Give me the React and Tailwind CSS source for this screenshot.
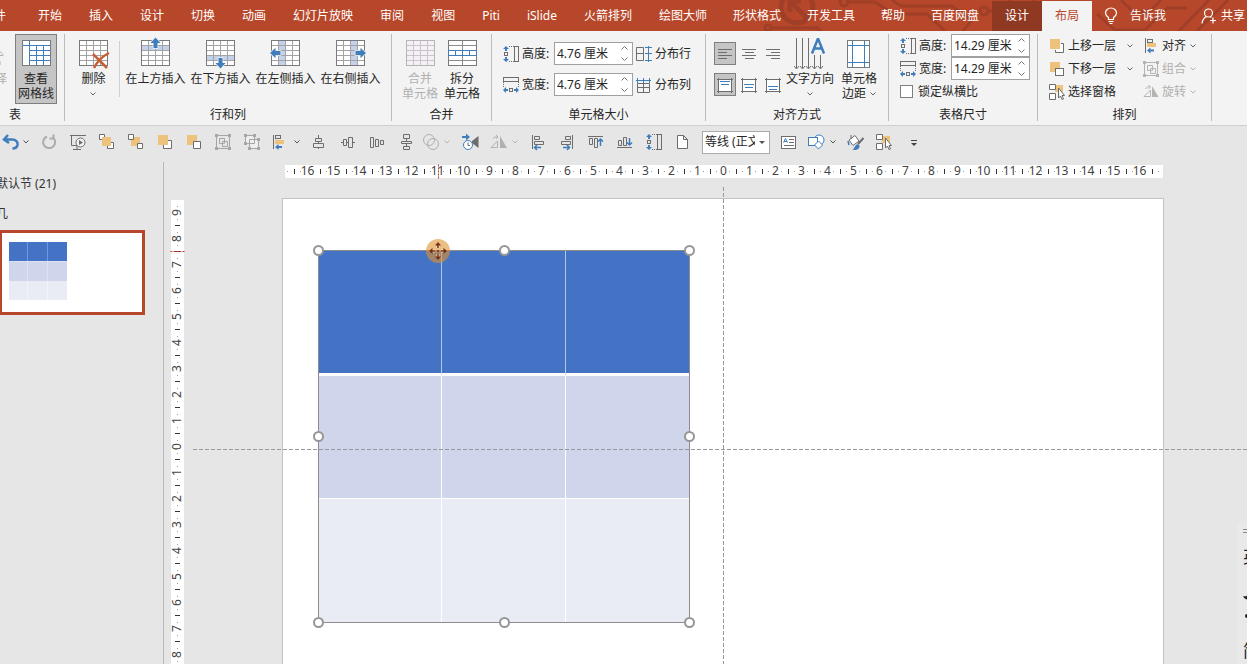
import React from 'react';

const GRAY = '#6d6d6d';
const BLUE = '#3f7dbd';
const SAND = '#ecc27c';
const MUTED = '#b4b4b4';

/* ---------- small shared drawings ---------- */

function Chevron({ className = 'text-[#666]' }) {
  return (
    <svg width="6" height="4" viewBox="0 0 6 4" className={`shrink-0 ${className}`} aria-hidden="true">
      <path d="M0.5 0.5 L3 3 L5.5 0.5" fill="none" stroke="currentColor" />
    </svg>
  );
}

function Icon({ size = 16, children }) {
  return (
    <svg width={size} height={size} viewBox={`0 0 ${size} ${size}`} className="shrink-0" fill="none" aria-hidden="true">
      {children}
    </svg>
  );
}

// 4 x 5 table used by the insert / delete buttons
function TableIcon({ band, faded = false, children }) {
  return (
    <svg width="29" height="27" viewBox="0 0 29 27" className="shrink-0 overflow-visible" fill="none" aria-hidden="true">
      <rect x="0.5" y="0.5" width="28" height="25" fill={faded ? '#f5f0f5' : '#fff'} />
      {band}
      <path
        d="M7.5 1V25M14.5 1V25M21.5 1V25M1 5.5H28M1 10.5H28M1 15.5H28M1 20.5H28"
        stroke={faded ? '#c9c4c9' : '#a3a3a3'}
      />
      <rect x="0.5" y="0.5" width="28" height="25" stroke={faded ? '#b5b5b5' : '#7a7a7a'} />
      {children}
    </svg>
  );
}

function BigArrow({ transform }) {
  return (
    <path
      d="M0 -5.5 L5 0 L2 0 L2 5 L-2 5 L-2 0 L-5 0 Z"
      transform={transform}
      fill={BLUE}
      stroke="#f3f3f3"
      strokeWidth="1.5"
      paintOrder="stroke"
    />
  );
}

function GridlinesIcon() {
  return (
    <svg width="29" height="27" viewBox="0 0 29 27" fill="none" aria-hidden="true">
      <rect x="0.5" y="0.5" width="28" height="25" fill="#fff" stroke="#7a7a7a" />
      <path d="M7.5 1V25M14.5 5V25M21.5 5V25M1 5.5H28M8 10.5H28M8 15.5H28M8 20.5H28" stroke={BLUE} />
    </svg>
  );
}

function SplitIcon() {
  return (
    <svg width="29" height="27" viewBox="0 0 29 27" fill="none" aria-hidden="true">
      <rect x="0.5" y="0.5" width="28" height="25" fill="#fff" stroke="#7a7a7a" />
      <path d="M14.5 1V10M14.5 16V25M1 5.5H28M1 20.5H28" stroke="#8c8c8c" />
      <path d="M0.5 10.5H28.5V15.5H0.5ZM7.5 10.5V15.5M14.5 10.5V15.5M21.5 10.5V15.5" stroke={BLUE} />
    </svg>
  );
}

function HeightIcon() {
  return (
    <Icon>
      <path d="M3 0 L6 3 H4V5H2V3H0ZM3 16 L6 13 H4V11H2V13H0Z" fill={BLUE} />
      <rect x="1.5" y="6.5" width="3" height="3" stroke={GRAY} />
      <path d="M6 0.5H11M6 15.5H11" stroke={GRAY} strokeDasharray="1 1" />
      <rect x="11.5" y="0.5" width="4" height="15" stroke={GRAY} />
    </Icon>
  );
}

function WidthIcon() {
  return (
    <Icon>
      <rect x="0.5" y="0.5" width="15" height="4" stroke={GRAY} />
      <path d="M0.5 5V10M15.5 5V10" stroke={GRAY} strokeDasharray="1 1" />
      <rect x="6.5" y="11.5" width="3" height="3" stroke={GRAY} />
      <path d="M0 13 L3 10 V12H5V14H3V16ZM16 13 L13 10 V12H11V14H13V16Z" fill={BLUE} />
    </Icon>
  );
}

function DistributeRowsIcon() {
  return (
    <Icon>
      <path d="M0.5 1.5H7.5V14.5H0.5ZM0.5 7.5H7.5" stroke={GRAY} />
      <path d="M9 1.5H16M9 7.5H16M9 14.5H16M12.5 0V16" stroke={BLUE} />
    </Icon>
  );
}

function DistributeColumnsIcon() {
  return (
    <Icon>
      <path d="M1.5 6.5H13.5V15.5H1.5ZM7.5 6.5V15.5M1 10.5H14" stroke={GRAY} />
      <path d="M0 3.5H15M1.5 1V6M7.5 1V6M13.5 1V6" stroke={BLUE} />
    </Icon>
  );
}

function HAlignIcon({ short }) {
  return (
    <Icon>
      <path d={`M1 3.5H15M${short} 6.5h9M1 9.5H15M${short} 12.5h9`} stroke={GRAY} />
    </Icon>
  );
}

function VAlignIcon({ y }) {
  return (
    <Icon>
      <rect x="1.5" y="2.5" width="13" height="12" fill="#fff" stroke={GRAY} />
      <path d="M0 2.5H3M13 2.5H16M1.5 1V4M14.5 1V4M0 14.5H3M13 14.5H16M1.5 13V16M14.5 13V16" stroke={GRAY} />
      <path d={`M3 ${y}h10M4 ${y + 3}h8`} stroke={BLUE} />
    </Icon>
  );
}

function TextDirectionIcon() {
  return (
    <svg width="32" height="32" viewBox="0 0 32 32" fill="none" aria-hidden="true">
      <path d="M2.5 0V30M8.5 0V30M14.5 0V30M20.5 17V30M26.5 17V30" stroke={GRAY} />
      <path d="M0 28L2.5 31L5 28M6 28L8.5 31L11 28M12 28L14.5 31L17 28M18 28L20.5 31L23 28M24 28L26.5 31L29 28" stroke={GRAY} />
      <path d="M18 15.5L24 0.5L30 15.5M20 10.5H28" stroke={BLUE} strokeWidth="2.5" />
    </svg>
  );
}

function MarginsIcon() {
  return (
    <svg width="24" height="28" viewBox="0 0 24 28" fill="none" aria-hidden="true">
      <rect x="0.5" y="0.5" width="22" height="27" fill="#fff" stroke="#7a7a7a" />
      <path d="M5.5 1V27M17.5 1V27M1 5.5H22M1 22.5H22" stroke={BLUE} />
    </svg>
  );
}

function BringForwardIcon() {
  return (
    <Icon>
      <path d="M12 5.5H14.5V14.5H6.5V12" stroke={GRAY} fill="#fff" />
      <rect x="1" y="1" width="10" height="10" fill={SAND} />
    </Icon>
  );
}

function SendBackwardIcon() {
  return (
    <Icon>
      <rect x="1" y="1" width="10" height="10" fill={SAND} />
      <rect x="6.5" y="7.5" width="8" height="7" fill="#fff" stroke={GRAY} />
    </Icon>
  );
}

function SelectionPaneIcon() {
  return (
    <Icon>
      <rect x="6" y="1" width="8" height="7" fill={SAND} />
      <path d="M0.5 0.5H6.5V5.5H0.5ZM0.5 9.5H6.5V15.5H0.5Z" fill="#fff" stroke={GRAY} />
      <path d="M9.5 4V14L11.5 12L13 15.5L14.5 15L13 11.5H15.5Z" fill="#fff" stroke={GRAY} />
    </Icon>
  );
}

function AlignObjectsIcon() {
  return (
    <Icon>
      <path d="M2.5 0V15" stroke={GRAY} />
      <rect x="4.5" y="1.5" width="5" height="3" stroke={GRAY} />
      <rect x="4" y="5" width="9" height="4" fill={SAND} />
      <path d="M4 12.5L7.5 9.5V11.5H11V13.5H7.5V15.5Z" fill={BLUE} />
    </Icon>
  );
}

function GroupIcon() {
  return (
    <Icon>
      <path d="M1.5 1.5H14.5V14.5H1.5ZM4.5 4.5H9.5V9.5H4.5ZM7.5 7.5H12.5V12.5H7.5Z" stroke={MUTED} />
      <path d="M0 0H3V3H0ZM13 0H16V3H13ZM0 13H3V16H0ZM13 13H16V16H13Z" fill={MUTED} />
    </Icon>
  );
}

function RotateIcon() {
  return (
    <Icon>
      <path d="M1 12.5L7.5 6V12.5Z" stroke={MUTED} />
      <path d="M9 2L15.5 13H9Z" fill={MUTED} />
      <path d="M2.5 5C3.5 3 5 2.5 7 3M5.5 1L7.5 3L5.5 5" stroke={MUTED} />
    </Icon>
  );
}

/* ---------- title tabs ---------- */

const mainTabs = ['开始', '插入', '设计', '切换', '动画', '幻灯片放映', '审阅', '视图', 'Piti', 'iSlide', '火箭排列', '绘图大师'];
const extraTabs = ['形状格式', '开发工具', '帮助', '百度网盘'];

function Tab({ children }) {
  return <button className="h-full shrink-0 px-[13px] whitespace-nowrap">{children}</button>;
}

function TabBar() {
  return (
    <header className="relative h-[31px] shrink-0 overflow-hidden bg-[#b7472a] text-white">
      <svg className="absolute top-0 right-0" width="500" height="31" viewBox="0 0 500 31" fill="none" aria-hidden="true">
        <g stroke="#a03f27" strokeWidth="3">
          <circle cx="50" cy="7" r="16" strokeWidth="5" />
          <path d="M60 18L44 2M43 12V1H54" strokeWidth="5" />
          <circle cx="21" cy="28" r="3" />
          <path d="M24 28H70L76 33" />
          <circle cx="97" cy="2" r="4" />
          <path d="M101 2H128L146 14H180L198 31" />
          <path d="M145 0L154 6H205L225 20L216 31" />
          <circle cx="237" cy="11" r="4" />
          <path d="M241 11H262L280 29M262 0L290 27M286 0L300 14" />
          <path d="M350 14L368 30H398L420 8H440M374 0L386 12H402L414 0M432 31L462 0M450 31L481 0" />
        </g>
      </svg>

      <div className="relative flex h-full items-stretch pt-px text-xs">
        <nav className="-ml-[31px] flex gap-px">
          <button className="shrink-0 pr-[18px] pl-[13px]">文件</button>
          {mainTabs.map((name) => (
            <Tab key={name}>{name}</Tab>
          ))}
        </nav>
        <nav className="flex">
          {extraTabs.map((name) => (
            <Tab key={name}>{name}</Tab>
          ))}
          <button className="shrink-0 bg-[#8f3922] px-[13px]">设计</button>
          <button className="shrink-0 bg-[#f3f3f3] px-[13px] text-[#b7472a]">布局</button>
        </nav>
        <button className="flex shrink-0 items-center gap-3 pl-3">
          <svg width="14" height="18" viewBox="0 0 14 18" fill="none" stroke="#fff" strokeWidth="1.2" aria-hidden="true">
            <path d="M4.5 12.5V10.5C2.5 9 1.5 8 1.5 6A5.5 5 0 0 1 12.5 6C12.5 8 11.5 9 9.5 10.5V12.5ZM4.5 14.5H9.5M5.5 16.5H8.5" />
          </svg>
          告诉我
        </button>
        <button className="ml-auto flex shrink-0 items-center gap-1 pr-[2px]">
          <svg width="16" height="16" viewBox="0 0 16 16" fill="none" stroke="#fff" strokeWidth="1.2" aria-hidden="true">
            <circle cx="7.5" cy="5" r="4" />
            <path d="M1 15.5C1.5 12 3 9.5 5.5 8.5M9 8.5L10.5 9.5M12 9.5V15.5M9 12.5H15" />
          </svg>
          共享
        </button>
      </div>
    </header>
  );
}

/* ---------- ribbon ---------- */

function Group({ label, className, children }) {
  return (
    <section className={`flex shrink-0 flex-col justify-between border-r border-[#bcbcbc] ${className}`}>
      <div className="flex items-start">{children}</div>
      <h2 className="text-center leading-3">{label}</h2>
    </section>
  );
}

function BigButton({ icon, children, className = 'w-[42px]', pressed, disabled }) {
  return (
    <button
      aria-pressed={pressed}
      disabled={disabled}
      className={`flex h-[70px] shrink-0 flex-col items-center gap-1 border pt-[5px] leading-[15px] whitespace-nowrap ${
        pressed ? 'border-[#7f7f7f] bg-[#c5c5c5]' : 'border-transparent'
      } ${disabled ? 'text-[#b0b0b0]' : ''} ${className}`}
    >
      <span className="flex h-[27px] items-center justify-center">{icon}</span>
      <span className="flex flex-col items-center">{children}</span>
    </button>
  );
}

function SpinField({ id, label, icon, value }) {
  return (
    <div className="flex h-[23px] items-center">
      {icon}
      <label htmlFor={id} className="ml-[3px] w-8 shrink-0">
        {label}
      </label>
      <div className="flex h-[23px] w-[79px] shrink-0 border border-[#a0a0a0] bg-white">
        <input id={id} defaultValue={value} className="min-w-0 flex-1 pl-[2px] outline-none" />
        <div className="flex w-4 flex-col text-[#777]">
          <button aria-label={`${label}增加`} className="flex flex-1 items-center justify-center">
            <svg width="7" height="4" viewBox="0 0 7 4" fill="none" stroke="currentColor">
              <path d="M0.5 3.5L3.5 0.5L6.5 3.5" />
            </svg>
          </button>
          <button aria-label={`${label}减少`} className="flex flex-1 items-center justify-center">
            <svg width="7" height="4" viewBox="0 0 7 4" fill="none" stroke="currentColor">
              <path d="M0.5 0.5L3.5 3.5L6.5 0.5" />
            </svg>
          </button>
        </div>
      </div>
    </div>
  );
}

function ToggleButton({ label, pressed, children }) {
  return (
    <button
      aria-label={label}
      aria-pressed={pressed}
      className={`flex h-[23px] w-[22px] items-center justify-center border ${
        pressed ? 'border-[#7f7f7f] bg-[#c5c5c5]' : 'border-transparent'
      }`}
    >
      {children}
    </button>
  );
}

function SmallButton({ icon, label, disabled }) {
  return (
    <button disabled={disabled} className={`flex h-[23px] items-center gap-[3px] whitespace-nowrap ${disabled ? 'text-[#b0b0b0]' : ''}`}>
      {icon}
      {label}
    </button>
  );
}

function Ribbon() {
  return (
    <div className="flex h-[95px] shrink-0 overflow-hidden border-b border-[#cfcfcf] bg-[#f3f3f3] pt-[3px] pb-[4px] text-xs text-[#262626]">
      <Group label={<span className="pr-[34px]">表</span>} className="w-[65px]">
        <button disabled className="-ml-6 flex h-[70px] w-[31px] shrink-0 flex-col items-end gap-1 pt-[6px] leading-[15px] text-[#b0b0b0]">
          <svg width="13" height="27" viewBox="0 0 13 27" fill="none" stroke="#b0b0b0" aria-hidden="true">
            <path d="M1 14.5L5 10.5L9 14.5V15.5H6M4 21V25H6V21Z" />
          </svg>
          选择
        </button>
        <BigButton icon={<GridlinesIcon />} pressed className="ml-2 w-[42px]">
          <span>查看</span>
          <span>网格线</span>
        </BigButton>
      </Group>

      <Group label="行和列" className="w-[327px]">
        <BigButton
          className="ml-2 w-[41px]"
          icon={
            <TableIcon>
              <path d="M14 14L28 28M30 13C22 17 18 22 15 28" stroke="#c65f35" strokeWidth="2.5" />
            </TableIcon>
          }
        >
          <span>删除</span>
          <span className="flex h-[15px] items-center">
            <Chevron />
          </span>
        </BigButton>
        <div className="mr-[3px] ml-[5px] mt-[7px] h-14 w-px bg-[#cfcfcf]" />
        <BigButton
          className="w-[65px]"
          icon={
            <TableIcon band={<rect x="1" y="6" width="27" height="4" fill="#c3d2ea" />}>
              <BigArrow transform="translate(14.5 3)" />
            </TableIcon>
          }
        >
          在上方插入
        </BigButton>
        <BigButton
          className="w-[65px]"
          icon={
            <TableIcon band={<rect x="1" y="16" width="27" height="4" fill="#c3d2ea" />}>
              <BigArrow transform="translate(14.5 23) rotate(180)" />
            </TableIcon>
          }
        >
          在下方插入
        </BigButton>
        <BigButton
          className="w-[65px]"
          icon={
            <TableIcon band={<rect x="8" y="1" width="6" height="24" fill="#c3d2ea" />}>
              <BigArrow transform="translate(4.5 13) rotate(-90)" />
            </TableIcon>
          }
        >
          在左侧插入
        </BigButton>
        <BigButton
          className="w-[65px]"
          icon={
            <TableIcon band={<rect x="15" y="1" width="6" height="24" fill="#c3d2ea" />}>
              <BigArrow transform="translate(24.5 13) rotate(90)" />
            </TableIcon>
          }
        >
          在右侧插入
        </BigButton>
      </Group>

      <Group label="合并" className="w-[100px]">
        <BigButton icon={<TableIcon faded />} disabled className="ml-[7px] w-[42px]">
          <span>合并</span>
          <span>单元格</span>
        </BigButton>
        <BigButton icon={<SplitIcon />}>
          <span>拆分</span>
          <span>单元格</span>
        </BigButton>
      </Group>

      <Group label="单元格大小" className="w-[214px]">
        <div className="ml-[11px] flex flex-col gap-2 pt-2">
          <div className="flex gap-[3px]">
            <SpinField id="cell-height" label="高度:" icon={<HeightIcon />} value="4.76 厘米" />
            <SmallButton icon={<DistributeRowsIcon />} label="分布行" />
          </div>
          <div className="flex gap-[3px]">
            <SpinField id="cell-width" label="宽度:" icon={<WidthIcon />} value="4.76 厘米" />
            <SmallButton icon={<DistributeColumnsIcon />} label="分布列" />
          </div>
        </div>
      </Group>

      <Group label="对齐方式" className="w-[183px]">
        <div className="ml-2 grid grid-cols-[repeat(3,22px)] gap-x-[2px] gap-y-2 pt-2">
          <ToggleButton label="左对齐" pressed><HAlignIcon short={1} /></ToggleButton>
          <ToggleButton label="居中"><HAlignIcon short={4} /></ToggleButton>
          <ToggleButton label="右对齐"><HAlignIcon short={6} /></ToggleButton>
          <ToggleButton label="顶端对齐" pressed><VAlignIcon y={4.5} /></ToggleButton>
          <ToggleButton label="垂直居中"><VAlignIcon y={7.5} /></ToggleButton>
          <ToggleButton label="底端对齐"><VAlignIcon y={9.5} /></ToggleButton>
        </div>
        <BigButton icon={<TextDirectionIcon />} className="ml-px w-[50px]">
          <span>文字方向</span>
          <span className="flex h-[15px] items-center">
            <Chevron />
          </span>
        </BigButton>
        <BigButton icon={<MarginsIcon />} className="ml-[3px] w-[42px]">
          <span>单元格</span>
          <span className="flex items-center gap-1">
            边距 <Chevron />
          </span>
        </BigButton>
      </Group>

      <Group label="表格尺寸" className="w-[149px]">
        <div className="ml-[11px]">
          <SpinField id="table-height" label="高度:" icon={<HeightIcon />} value="14.29 厘米" />
          <SpinField id="table-width" label="宽度:" icon={<WidthIcon />} value="14.29 厘米" />
          <label className="flex h-[23px] items-center gap-[5px]">
            <input type="checkbox" className="size-[13px] appearance-none border border-[#7f7f7f] bg-white" />
            锁定纵横比
          </label>
        </div>
      </Group>

      <Group label="排列" className="w-[174px]">
        <div className="ml-[11px] flex gap-[10px]">
          <div>
            <div className="flex items-center gap-[11px]">
              <SmallButton icon={<BringForwardIcon />} label="上移一层" />
              <Chevron />
            </div>
            <div className="flex items-center gap-[11px]">
              <SmallButton icon={<SendBackwardIcon />} label="下移一层" />
              <Chevron />
            </div>
            <SmallButton icon={<SelectionPaneIcon />} label="选择窗格" />
          </div>
          <div>
            <div className="flex items-center gap-1">
              <SmallButton icon={<AlignObjectsIcon />} label="对齐" />
              <Chevron />
            </div>
            <div className="flex items-center gap-1">
              <SmallButton icon={<GroupIcon />} label="组合" disabled />
              <Chevron className="text-[#b4b4b4]" />
            </div>
            <div className="flex items-center gap-1">
              <SmallButton icon={<RotateIcon />} label="旋转" disabled />
              <Chevron className="text-[#b4b4b4]" />
            </div>
          </div>
        </div>
      </Group>
    </div>
  );
}

/* ---------- quick access toolbar ---------- */

const quickIcons = {
  undo: (
    <path d="M7 2L3 6.5L8 10M3 6.5H11C15 6.5 17 9 16.5 12C16 14.5 14 15.5 11.5 15.5" stroke={BLUE} strokeWidth="2.5" />
  ),
  redo: <path d="M13 4.5A6 6 0 1 1 7 3.5M13.5 1.5V5.5H9.5" stroke="#ababab" strokeWidth="2" />,
  slideshow: (
    <>
      <path d="M1 2.5H17M2.5 3V12.5H8M4 16.5H12M8 13V16" stroke={GRAY} />
      <circle cx="11.5" cy="9.5" r="4.5" fill="#f3f3f3" stroke={GRAY} />
      <path d="M10 7V12L14 9.5Z" fill={GRAY} />
    </>
  ),
  toFront: (
    <>
      <path d="M1.5 1.5H6.5V6.5H1.5ZM9.5 9.5H15.5V15.5H9.5Z" fill="#fff" stroke={GRAY} />
      <rect x="4" y="4" width="9" height="9" fill={SAND} />
    </>
  ),
  toBack: (
    <>
      <rect x="4" y="4" width="9" height="9" fill={SAND} />
      <path d="M1.5 1.5H6.5V6.5H1.5ZM10.5 10.5H15.5V15.5H10.5Z" fill="#fff" stroke={GRAY} />
    </>
  ),
  forward: (
    <>
      <path d="M7.5 7.5H15.5V15.5H7.5Z" fill="#fff" stroke={GRAY} />
      <rect x="2" y="2" width="10" height="10" fill={SAND} />
    </>
  ),
  backward: (
    <>
      <rect x="2" y="2" width="10" height="10" fill={SAND} />
      <path d="M8.5 8.5H15.5V15.5H8.5Z" fill="#fff" stroke={GRAY} />
    </>
  ),
  group: (
    <>
      <path d="M2.5 2.5H15.5V15.5H2.5ZM5.5 5.5H10.5V10.5H5.5ZM8.5 8.5H13.5V13.5H8.5Z" stroke="#a6a6a6" />
      <path d="M1 1H4V4H1ZM14 1H17V4H14ZM1 14H4V17H1ZM14 14H17V17H14Z" fill="#a6a6a6" />
    </>
  ),
  ungroup: (
    <>
      <path d="M2.5 2.5H11.5V10.5H2.5ZM6.5 6.5H15.5V15.5H6.5Z" fill="#eee" stroke="#a6a6a6" />
      <path d="M1 1H4V4H1ZM10 1H13V4H10ZM1 9H4V12H1ZM5 14H8V17H5ZM14 14H17V17H14ZM14 5H17V8H14Z" fill="#a6a6a6" />
    </>
  ),
  align: (
    <>
      <path d="M1.5 2V16" stroke={GRAY} />
      <rect x="3.5" y="2.5" width="5" height="3" stroke={GRAY} />
      <rect x="3" y="7" width="9" height="4" fill={SAND} />
      <path d="M3 14L6.5 11V13H10V15H6.5V17Z" fill={BLUE} />
    </>
  ),
  centerH: <path d="M7.5 2V5M7.5 8V10M7.5 14V16M4.5 5.5H10.5V8.5H4.5ZM2.5 10.5H12.5V14.5H2.5Z" stroke={GRAY} />,
  centerV: <path d="M1 9.5H3M6 9.5H8M12 9.5H15M3.5 6.5H6.5V12.5H3.5ZM8.5 4.5H12.5V14.5H8.5Z" stroke={GRAY} />,
  spreadH: <path d="M1.5 4.5H4.5V14.5H1.5ZM6.5 6.5H9.5V13.5H6.5ZM11.5 7.5H14.5V11.5H11.5Z" stroke={GRAY} />,
  spreadV: <path d="M5.5 1.5H11.5V5.5H5.5ZM3.5 8.5H13.5V10.5H3.5ZM5.5 13.5H11.5V16.5H5.5ZM8.5 6V8M8.5 11V13" stroke={GRAY} />,
  merge: (
    <>
      <circle cx="7" cy="7" r="5.5" stroke="#b0b0b0" />
      <circle cx="11" cy="11" r="5.5" stroke="#b0b0b0" />
    </>
  ),
  animation: (
    <>
      <path d="M1 3H5V0.5L9 4L5 7.5V5H1Z" fill={BLUE} />
      <circle cx="7" cy="12" r="4.5" fill="#fff" stroke={BLUE} />
      <path d="M7 9.5V12.5H9" stroke={GRAY} />
      <path d="M11 8L17.5 3V15L11 10Z" fill={GRAY} />
    </>
  ),
  rotate: (
    <>
      <path d="M1 14.5L7.5 8V14.5Z" stroke="#b0b0b0" />
      <path d="M10 3L17 15H10Z" fill="#b0b0b0" />
      <path d="M3 6C4 4 6 3.5 8 4M6 2L8 4L6 6" stroke="#b0b0b0" />
    </>
  ),
  left: (
    <>
      <path d="M3.5 2V16M5.5 3.5H10.5V6.5H5.5ZM5.5 8.5H14.5V11.5H5.5Z" stroke={GRAY} />
      <path d="M5 14.5H12M8 12L5.5 14.5L8 17" stroke={BLUE} strokeWidth="1.5" />
    </>
  ),
  right: (
    <>
      <path d="M14.5 2V16M7.5 3.5H12.5V6.5H7.5ZM3.5 8.5H12.5V11.5H3.5Z" stroke={GRAY} />
      <path d="M5 14.5H12M9 12L11.5 14.5L9 17" stroke={BLUE} strokeWidth="1.5" />
    </>
  ),
  top: (
    <>
      <path d="M1 3.5H16M2.5 5.5H5.5V11.5H2.5ZM7.5 5.5H10.5V14.5H7.5Z" stroke={GRAY} />
      <path d="M13.5 13V6M11 8.5L13.5 6L16 8.5" stroke={BLUE} strokeWidth="1.5" />
    </>
  ),
  bottom: (
    <>
      <path d="M1 14.5H16M2.5 7.5H5.5V12.5H2.5ZM7.5 4.5H10.5V12.5H7.5Z" stroke={GRAY} />
      <path d="M13.5 5V12M11 9.5L13.5 12L16 9.5" stroke={BLUE} strokeWidth="1.5" />
    </>
  ),
  height: (
    <>
      <path d="M4 1L7 4H5V6H3V4H1ZM4 17L7 14H5V12H3V14H1Z" fill={BLUE} />
      <rect x="2.5" y="7.5" width="3" height="3" stroke={GRAY} />
      <path d="M7 1.5H12M7 16.5H12" stroke={GRAY} strokeDasharray="1 1" />
      <rect x="12.5" y="1.5" width="4" height="15" stroke={GRAY} />
    </>
  ),
  page: <path d="M3.5 2.5H9.5L13.5 6.5V15.5H3.5ZM9.5 2.5V6.5H13.5" fill="#fff" stroke={GRAY} />,
  textBox: (
    <>
      <rect x="2.5" y="3.5" width="14" height="12" fill="#fff" stroke={GRAY} />
      <path d="M4.5 9.5L6.5 5.5L8.5 9.5M5 8.5H8" stroke={BLUE} />
      <path d="M10 6.5H15M10 9.5H15M5 12.5H15" stroke={GRAY} />
    </>
  ),
  shapes: (
    <>
      <circle cx="11" cy="7" r="5" fill="#fff" stroke={BLUE} />
      <rect x="0.5" y="4.5" width="9" height="8" fill="#fff" stroke={BLUE} />
      <path d="M10.5 8L14.5 12L10.5 16L6.5 12Z" fill="#fff" stroke={BLUE} />
    </>
  ),
  fill: (
    <>
      <path d="M2 7L8 2.5L12 8L6 12.5ZM4 2V6" fill="#fff" stroke={GRAY} />
      <path d="M16.5 5L11 11" stroke={GRAY} strokeWidth="2" />
      <path d="M5 16.5C8 16.5 8 10 11.5 11.5C14 13 12 17 8 17Z" fill={BLUE} />
      <path d="M1 8L2 12" stroke={BLUE} strokeWidth="1.5" />
    </>
  ),
  selection: (
    <>
      <rect x="6" y="3" width="8" height="7" fill={SAND} />
      <path d="M0.5 1.5H6.5V6.5H0.5ZM0.5 10.5H6.5V16.5H0.5Z" fill="#fff" stroke={GRAY} />
      <path d="M9.5 5V15L11.5 13L13 16.5L14.5 16L13 12.5H15.5Z" fill="#fff" stroke={GRAY} />
    </>
  ),
  more: (
    <>
      <path d="M6 7.5H12" stroke="#444" />
      <path d="M6 10H12L9 13Z" fill="#444" />
    </>
  ),
};

function QuickButton({ name, label, menu, faded }) {
  return (
    <button aria-label={label} className="flex shrink-0 items-center gap-1">
      <Icon size={18}>{quickIcons[name]}</Icon>
      {menu && <Chevron className={faded ? 'text-[#b4b4b4]' : 'text-[#555]'} />}
    </button>
  );
}

function QuickAccess() {
  return (
    <div className="flex h-8 shrink-0 items-center overflow-hidden pl-px text-xs">
      <div className="mr-[6px] flex gap-[11px]">
        <QuickButton name="undo" label="撤消" menu />
        <QuickButton name="redo" label="重复" />
        <QuickButton name="slideshow" label="从当前幻灯片开始" />
        <QuickButton name="toFront" label="置于顶层" />
        <QuickButton name="toBack" label="置于底层" />
        <QuickButton name="forward" label="上移一层" />
        <QuickButton name="backward" label="下移一层" />
        <QuickButton name="group" label="组合" />
        <QuickButton name="ungroup" label="取消组合" />
        <QuickButton name="align" label="对齐" menu />
        <QuickButton name="centerH" label="水平居中" />
        <QuickButton name="centerV" label="垂直居中" />
        <QuickButton name="spreadH" label="横向分布" />
        <QuickButton name="spreadV" label="纵向分布" />
      </div>
      <div className="flex gap-[11px]">
        <QuickButton name="merge" label="合并形状" menu faded />
        <QuickButton name="animation" label="动画窗格" />
        <QuickButton name="rotate" label="旋转" menu faded />
        <QuickButton name="left" label="左对齐" />
        <QuickButton name="right" label="右对齐" />
        <QuickButton name="top" label="顶端对齐" />
        <QuickButton name="bottom" label="底端对齐" />
        <QuickButton name="height" label="高度" />
        <QuickButton name="page" label="新建" />
      </div>
      <div className="relative mr-[9px] ml-[10px] flex shrink-0 items-center">
        <select aria-label="字体" className="h-[23px] w-[68px] appearance-none border border-[#ababab] bg-white pr-[14px] pl-[2px] text-[#262626]">
          <option>等线 (正文)</option>
        </select>
        <svg width="6" height="3" viewBox="0 0 6 3" className="pointer-events-none absolute right-[5px]" aria-hidden="true">
          <path d="M0 0H6L3 3Z" fill="#555" />
        </svg>
      </div>
      <div className="flex gap-[11px]">
        <QuickButton name="textBox" label="文本框" />
        <QuickButton name="shapes" label="形状" menu />
        <QuickButton name="fill" label="形状填充" />
        <QuickButton name="selection" label="选择窗格" />
        <QuickButton name="more" label="自定义快速访问工具栏" />
      </div>
    </div>
  );
}

/* ---------- rulers ---------- */

const UNIT = 26;

// Scale around its own zero; numbers grow in both directions.
// `quarters` is how many quarter-unit ticks fit on each side.
function Scale({ max, quarters, vertical }) {
  const marks = [];
  for (let i = -max; i <= max; i += 1) marks.push(i);

  let light = '';
  let dark = '';
  for (let q = -quarters; q <= quarters; q += 1) {
    const x = Math.floor((q * UNIT) / 4);
    if (q % 2 !== 0) light += `M${x} -0.5v1`;
    else if (q % 4 !== 0) dark += `M${x} -2.5v5`;
  }

  return (
    <g transform={vertical ? 'translate(0 -0.5) rotate(-90)' : 'translate(-0.5 0)'}>
      <path d={light} stroke="#999" />
      <path d={dark} stroke="#333" />
      {marks.map((i) => (
        <text key={i} x={i * UNIT} y="3" textAnchor="middle" fontSize="12" fill="#444">
          {Math.abs(i)}
        </text>
      ))}
    </g>
  );
}

function HorizontalRuler() {
  return (
    <svg className="h-[13px] w-full overflow-visible bg-white" aria-hidden="true">
      <svg x="50%" y="50%" overflow="visible">
        <Scale max={16} quarters={67} />
        <path d="M-285.5 -7V7" stroke="#c0402a" strokeDasharray="2 1" />
      </svg>
    </svg>
  );
}

function VerticalRuler() {
  return (
    <svg className="h-[494px] w-[13px] overflow-visible bg-white" aria-hidden="true">
      <svg x="50%" y="50%" overflow="visible">
        <Scale max={9} quarters={37} vertical />
        <path d="M-7 -195.5H7" stroke="#c0402a" strokeDasharray="2 1" />
      </svg>
    </svg>
  );
}

/* ---------- slide ---------- */

function Handle({ className }) {
  return <span className={`absolute size-[11px] rounded-full border-2 border-[#969696] bg-white ${className}`} />;
}

function MoveCursor() {
  return (
    <svg width="24" height="24" viewBox="0 0 24 24" className="absolute -top-[11px] left-[108px]" aria-hidden="true">
      <circle cx="12" cy="12" r="12" fill="#de932f" fillOpacity="0.6" />
      <path d="M12 5V9M12 15V19M5 12H9M15 12H19" fill="none" stroke="#f6dcc0" strokeWidth="3" />
      <path d="M12 5V9M12 15V20M5 12H9M15 12H20" stroke="#7a2d18" strokeWidth="1.5" />
      <path d="M12 3L15 6.5H9ZM12 21L15 17.5H9ZM3 12L6.5 9V15ZM21 12L17.5 9V15Z" fill="#7a2d18" />
      <circle cx="12" cy="12" r="1" fill="#7a2d18" />
    </svg>
  );
}

function SlideTable() {
  return (
    <div className="absolute top-[51px] left-[35px] w-[372px]">
      <table className="w-full table-fixed border-separate border-spacing-0 border border-[#8c8c8c]">
        <tbody>
          <tr className="bg-[#4472c4]">
            <td className="h-[125px] border-r border-b-[3px] border-r-[#b4c7e7] border-b-white p-0" />
            <td className="h-[125px] border-r border-b-[3px] border-r-[#b4c7e7] border-b-white p-0" />
            <td className="h-[125px] border-b-[3px] border-white p-0" />
          </tr>
          <tr className="bg-[#cfd5ea]">
            <td className="h-[123px] border-r border-b border-white p-0" />
            <td className="h-[123px] border-r border-b border-white p-0" />
            <td className="h-[123px] border-b border-white p-0" />
          </tr>
          <tr className="bg-[#e9ebf5]">
            <td className="h-[123px] border-r border-white p-0" />
            <td className="h-[123px] border-r border-white p-0" />
            <td className="h-[123px] p-0" />
          </tr>
        </tbody>
      </table>
      <Handle className="-top-[5px] -left-[5px]" />
      <Handle className="-top-[5px] left-[181px]" />
      <Handle className="-top-[5px] -right-[5px]" />
      <Handle className="top-[181px] -left-[5px]" />
      <Handle className="top-[181px] -right-[5px]" />
      <Handle className="-bottom-[5px] -left-[5px]" />
      <Handle className="-bottom-[5px] left-[181px]" />
      <Handle className="-right-[5px] -bottom-[5px]" />
      <MoveCursor />
    </div>
  );
}

function Slide() {
  return (
    <div className="relative mt-5 mr-[83px] ml-[98px] h-[497px] min-w-0 flex-1 border border-[#c3c3c3] bg-white">
      <SlideTable />
      <svg className="absolute -top-[12px] left-1/2 h-[540px] w-px" aria-hidden="true">
        <path d="M0.5 0V540" stroke="#999" strokeDasharray="4 2" />
      </svg>
      <div className="absolute top-[250px] -right-[84px] -left-[90px]">
        <svg className="block h-px w-full" aria-hidden="true">
          <line x1="0" y1="0.5" x2="100%" y2="0.5" stroke="#999" strokeDasharray="4 2" />
        </svg>
      </div>
    </div>
  );
}

/* ---------- thumbnails ---------- */

function Thumbnails() {
  return (
    <aside className="w-[164px] shrink-0 overflow-hidden border-r border-[#b9b9b9] pt-[14px] text-xs text-[#333]">
      <p className="-ml-1 leading-4 whitespace-nowrap">默认节 (21)</p>
      <p className="mt-[14px] -ml-1 leading-4">几</p>
      <button
        aria-label="幻灯片"
        className="mt-2 -ml-px flex h-[85px] w-[146px] items-start border-[3px] border-[#b7472a] bg-white pt-[9px] pl-[7px]"
      >
        <span className="grid size-[58px] grid-cols-3 grid-rows-3">
          <span className="border-r border-[#6f9bdc] bg-[#4472c4]" />
          <span className="border-r border-[#6f9bdc] bg-[#4472c4]" />
          <span className="bg-[#4472c4]" />
          <span className="border-t border-r border-[#dde1f1] bg-[#cfd5ea]" />
          <span className="border-t border-r border-[#dde1f1] bg-[#cfd5ea]" />
          <span className="border-t border-[#dde1f1] bg-[#cfd5ea]" />
          <span className="border-r border-[#f1f3f9] bg-[#e9ebf5]" />
          <span className="border-r border-[#f1f3f9] bg-[#e9ebf5]" />
          <span className="bg-[#e9ebf5]" />
        </span>
      </button>
    </aside>
  );
}

// Input method bar docked at the window edge
function ImeBar() {
  return (
    <div className="absolute right-0 bottom-0 flex h-[141px] w-[10px] flex-col overflow-hidden bg-[#e9e9e9] pl-[6px] text-[17px] leading-[20px] text-[#222]">
      <span className="mt-[6px] h-1 w-4 shrink-0 border-y border-[#888]" />
      <span className="mt-[14px] w-5 shrink-0">英</span>
      <svg width="16" height="30" viewBox="0 0 16 30" className="mt-6 shrink-0" aria-hidden="true">
        <path d="M0 5C3 6 6 4 7 1V9C4 9 1 8 0 5Z" fill="#222" />
        <circle cx="4" cy="25" r="2" fill="#222" />
      </svg>
      <span className="mt-5 w-5 shrink-0">简</span>
    </div>
  );
}

export default function App() {
  return (
    <div
      lang="zh-CN"
      className="relative flex h-screen flex-col overflow-hidden bg-[#e6e6e6] font-['Noto_Sans','Noto_Sans_CJK_SC',sans-serif]"
    >
      <TabBar />
      <Ribbon />
      <QuickAccess />
      <div className="mt-1 flex min-h-0 flex-1">
        <Thumbnails />
        <main className="min-w-0 flex-1 overflow-hidden pt-[3px]">
          <div className="mr-[84px] ml-[121px] flex">
            <HorizontalRuler />
          </div>
          <div className="flex items-start">
            <div className="mt-[22px] ml-[7px] w-[13px] shrink-0">
              <VerticalRuler />
            </div>
            <Slide />
          </div>
        </main>
      </div>
      <ImeBar />
    </div>
  );
}
